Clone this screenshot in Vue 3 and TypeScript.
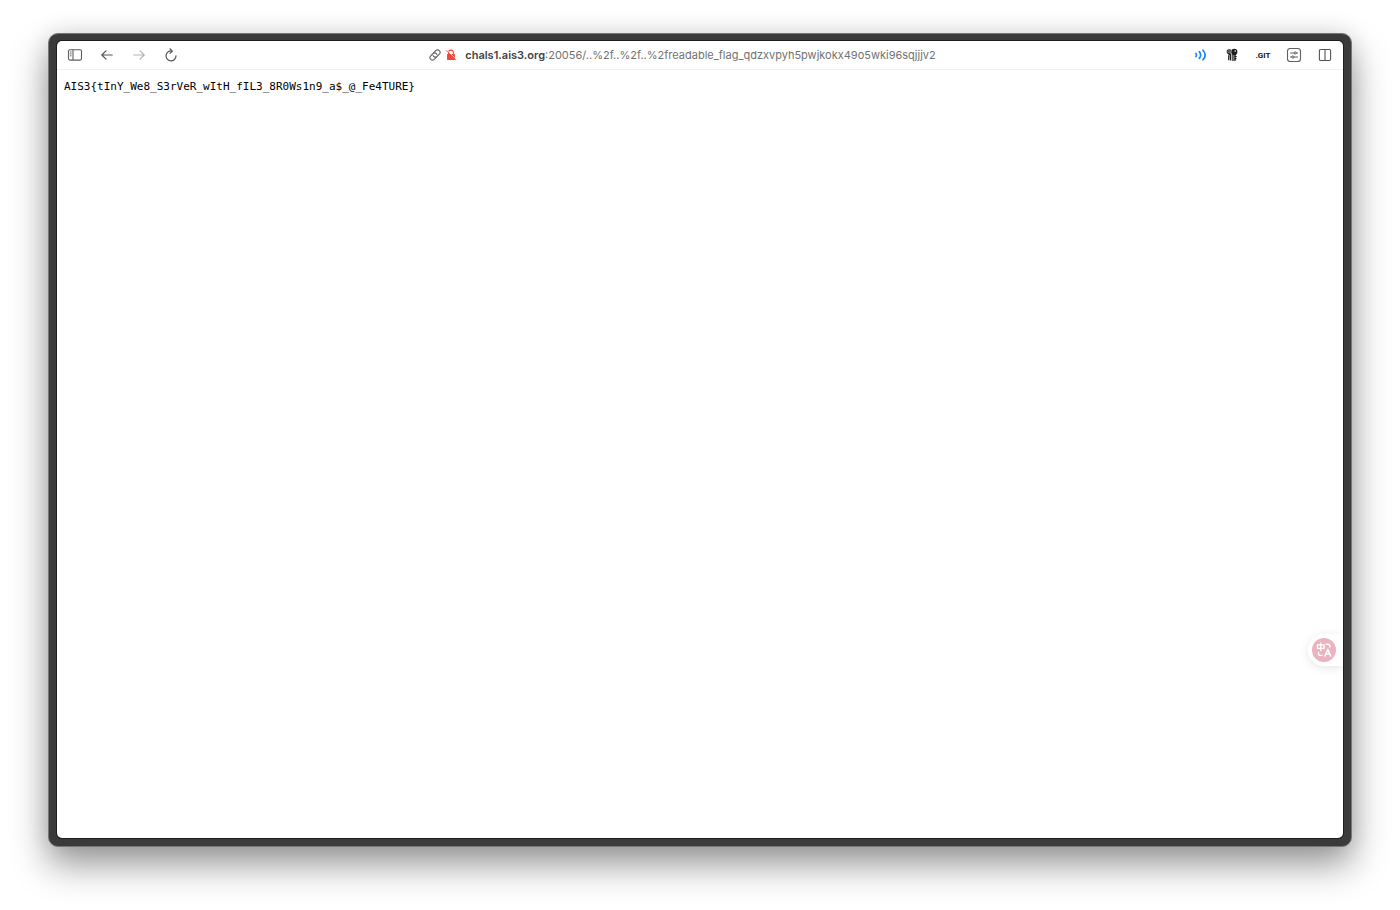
<script setup lang="ts">
const host = 'chals1.ais3.org'
const path = ':20056/..%2f..%2f..%2freadable_flag_qdzxvpyh5pwjkokx49o5wki96sqjjjv2'
const flag = 'AIS3{tInY_We8_S3rVeR_wItH_fIL3_8R0Ws1n9_a$_@_Fe4TURE}'
</script>

<template>
  <div class="desktop">
    <div class="frame">
      <div class="window">
        <header class="toolbar">
          <nav class="group" aria-label="Navigation">
            <button class="tool" type="button" aria-label="Toggle sidebar">
              <svg width="16" height="16" viewBox="0 0 16 16" fill="none" stroke="#5c5c5c">
                <rect x="1.5" y="2.7" width="13" height="10.4" rx="1.5" stroke-width="1.1" />
                <path d="M6 2.7v10.4" stroke-width="1.1" />
                <path d="M2.9 5h1.7M2.9 6.9h1.7M2.9 8.8h1.7" stroke-width=".9" />
              </svg>
            </button>
            <button class="tool" type="button" aria-label="Back">
              <svg width="16" height="16" viewBox="0 0 16 16" fill="none" stroke="#555" stroke-width="1.2" stroke-linecap="round" stroke-linejoin="round">
                <path d="M13.2 8H2.8M7 3.8 2.8 8 7 12.2" />
              </svg>
            </button>
            <button class="tool" type="button" aria-label="Forward" disabled>
              <svg width="16" height="16" viewBox="0 0 16 16" fill="none" stroke="#b5b5b5" stroke-width="1.2" stroke-linecap="round" stroke-linejoin="round">
                <path d="M2.8 8h10.4M9 3.8 13.2 8 9 12.2" />
              </svg>
            </button>
            <button class="tool" type="button" aria-label="Reload">
              <svg width="16" height="16" viewBox="0 0 16 16" fill="none" stroke="#555" stroke-width="1.2" stroke-linecap="round" stroke-linejoin="round">
                <path d="M9.2 4A5 5 0 1 0 13 8.8M7 1.8 9.4 4.1 7 6.4" />
              </svg>
            </button>
          </nav>

          <button class="address" type="button">
            <svg width="12" height="12" viewBox="0 0 12 12" fill="none" stroke="#666" stroke-width="1.1" stroke-linecap="round">
              <g transform="rotate(-45 6 6)">
                <path d="M5.3 8.5H2.4a2.5 2.5 0 0 1 0-5h3.2a2.5 2.5 0 0 1 2.2 3.5" />
                <path d="M6.7 3.5h2.9a2.5 2.5 0 0 1 0 5H6.4a2.5 2.5 0 0 1-2.2-3.5" />
              </g>
            </svg>
            <svg class="insecure" width="12" height="12" viewBox="0 0 12 12">
              <path d="M3.5 5.4V3.5a2.4 2.4 0 0 1 4.8 0v1.9" fill="none" stroke="#f0473c" stroke-width="1.1" />
              <rect x="2" y="4.9" width="8" height="6.1" rx=".8" fill="#f0473c" />
              <path d="m2.2 1.4 8.7 8.7" stroke="#fff" stroke-width=".8" />
              <path d="m1.4 1.6 9.3 9.3" stroke="#f0473c" stroke-width=".9" stroke-linecap="round" />
            </svg>
            <span class="url"><b>{{ host }}</b>{{ path }}</span>
          </button>

          <div class="group end">
            <button class="tool" type="button" aria-label="Sound waves">
              <svg width="16" height="16" viewBox="0 0 16 16" fill="none" stroke="#1a84ff" stroke-width="1.7" stroke-linecap="round">
                <path d="M3 6.5q1 1.5 0 3M6.3 4.6q2.7 3.4 0 6.8M10 3.2q4.4 4.8 0 9.6" />
              </svg>
            </button>
            <button class="tool" type="button" aria-label="Keys">
              <svg width="16" height="16" viewBox="0 0 16 16" fill="#1c1c1c">
                <path d="M3 3.1C4.4 1.8 6.2 2 7.2 2.8c-.9 1.6-.7 3.3.1 4.5v6.2H5.7V8.2C3 7.6 2.1 5.1 3 3.1z" />
                <path d="M4.1 8.2h1.2v3.2l-.5.6.5.6-.7 1-.5-.6z" />
                <circle cx="10.3" cy="4.9" r="3.1" />
                <path d="M8.3 7h1.3v7H8.3zM10.2 7h1.5v1.9h1v1.2h-1v1h.8v1.2h-.8v1.3l-.8.7-.7-.7z" />
                <circle cx="11.2" cy="4" r=".8" fill="#fff" />
                <path d="M4.3 3.2q-.9 1.5.3 3M6 3.1q-.9 1.7.4 3.8" fill="none" stroke="#fff" stroke-width=".5" />
              </svg>
            </button>
            <button class="tool git" type="button">.GIT</button>
            <button class="tool" type="button" aria-label="Page settings">
              <svg width="16" height="16" viewBox="0 0 16 16" fill="none" stroke="#606060">
                <rect x="1.5" y="1.5" width="13" height="13" rx="2.8" stroke-width="1.1" />
                <path d="M4.6 6h3.5M10.4 6h1.2M4.6 10h1.2M8.2 10h3.4" stroke-linecap="round" />
                <circle cx="9.2" cy="6" r="1.1" />
                <circle cx="6.9" cy="10" r="1.1" />
              </svg>
            </button>
            <button class="tool" type="button" aria-label="Split view">
              <svg width="16" height="16" viewBox="0 0 16 16" fill="none" stroke="#555" stroke-width="1.1">
                <rect x="2.4" y="2.5" width="11.2" height="11" rx="1.2" />
                <path d="M8 2.5v11" />
              </svg>
            </button>
          </div>
        </header>

        <main class="page">
          <pre class="flag">{{ flag }}</pre>
          <button class="translate" type="button" aria-label="Translate page">
            <svg width="24" height="24" viewBox="0 0 24 24" fill="none" stroke="#fff" stroke-width="1.4" stroke-linecap="round" stroke-linejoin="round">
              <circle cx="12" cy="12" r="12" fill="#ebb3c1" stroke="none" />
              <path d="M5.5 6.9h6.6v3.4H5.5zM8.8 5.2v7.4" stroke-width="1.3" />
              <path d="M14.2 6.3h1.7q2 0 2 2v.7M6.5 14.4v1q0 2 2 2H10" />
              <path d="m12.9 18.1 2.9-6.9 2.9 6.9M13.9 16h3.8" />
            </svg>
          </button>
        </main>
      </div>
    </div>
  </div>
</template>

<style>
body {
  margin: 0;
  background: #fff;
}
</style>

<style scoped>
.desktop {
  display: flex;
  box-sizing: border-box;
  min-height: 100vh;
  padding: 33px 48px 63px;
  overflow: hidden;
  background: #fff;
}

.frame {
  display: flex;
  flex: 1;
  padding: 7px 8px 8px;
  border: 1px solid #777;
  border-radius: 10px;
  background: #3a3a3a;
  box-shadow: 0 18px 36px rgba(0, 0, 0, 0.4), 0 0 24px rgba(0, 0, 0, 0.1);
}

.window {
  display: flex;
  flex: 1;
  flex-direction: column;
  min-width: 0;
  overflow: hidden;
  border-radius: 5px;
  background: #fff;
  box-shadow: 0 0 0 1px #1d1d1d;
}

.toolbar {
  display: grid;
  grid-template-columns: 1fr auto 1fr;
  align-items: center;
  height: 28px;
  padding: 0 10px;
  border-bottom: 1px solid #f1f1f1;
  font-family: Inter, "Liberation Sans", sans-serif;
}

.group {
  display: flex;
  gap: 16px;
}

.end {
  justify-content: flex-end;
  gap: 15px;
}

button {
  margin: 0;
  padding: 0;
  border: 0;
  background: none;
  font: inherit;
}

svg {
  display: block;
  flex: none;
}

.tool {
  display: flex;
  align-items: center;
  justify-content: center;
  width: 16px;
  height: 16px;
}

.git {
  color: #111;
  font-family: "Liberation Sans Narrow", Roboto, sans-serif;
  font-size: 8px;
  font-weight: 700;
}

.address {
  display: flex;
  align-items: center;
  margin-right: 35px;
  color: #727272;
  font-size: 11px;
  line-height: 16px;
  white-space: nowrap;
}

.insecure {
  margin: 0 8px 0 4px;
}

.url b {
  color: #444;
  font-weight: 600;
}

.page {
  position: relative;
  flex: 1;
}

.flag {
  margin: 0;
  padding: 10px 7px;
  color: #000;
  font-family: "DejaVu Sans Mono", monospace;
  font-size: 11px;
  line-height: 14px;
}

.translate {
  position: absolute;
  right: 0;
  bottom: 172px;
  padding: 4px 7px 4px 4px;
  border-radius: 16px 0 0 16px;
  background: #fff;
  box-shadow: 0 2px 10px rgba(0, 0, 0, 0.1);
}
</style>
